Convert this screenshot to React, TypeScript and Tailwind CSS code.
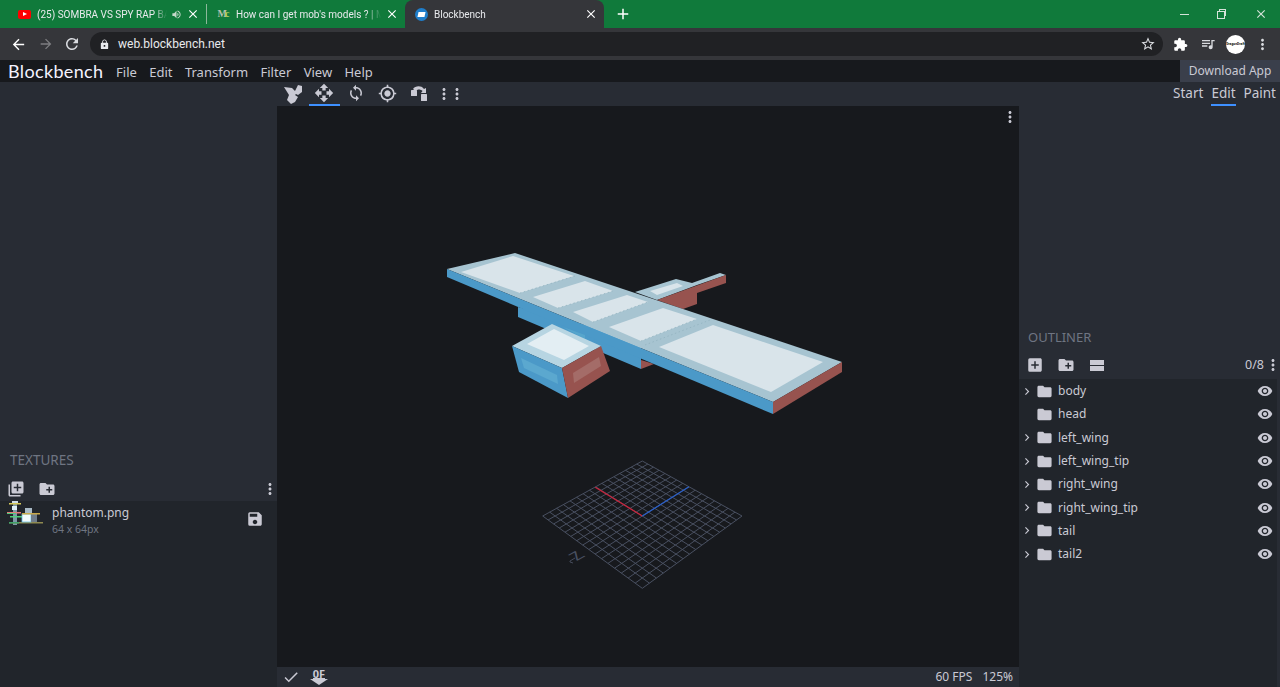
import type { ReactNode } from 'react';
import {
  MdAdd, MdAddBox, MdArrowBack, MdArrowForward, MdCheck, MdChevronRight, MdClose, MdCreateNewFolder,
  MdExtension, MdFolder, MdGpsFixed, MdLibraryAdd, MdLock, MdMoreVert, MdOpenWith, MdQueueMusic,
  MdRefresh, MdSave, MdStarBorder, MdSync, MdVisibility, MdVolumeUp,
} from 'react-icons/md';

const menus = ['File', 'Edit', 'Transform', 'Filter', 'View', 'Help'];

const outliner = [
  { name: 'body', arrow: true },
  { name: 'head', arrow: false },
  { name: 'left_wing', arrow: true },
  { name: 'left_wing_tip', arrow: true },
  { name: 'right_wing', arrow: true },
  { name: 'right_wing_tip', arrow: true },
  { name: 'tail', arrow: true },
  { name: 'tail2', arrow: true },
];

// model faces, in paint order, as traced in screen coordinates
const faces: [string, string][] = [
  ['#a7c4d1', '635,292 676,279 692,283 720,273 726,275 697,285 657,300'],
  ['#d9e4ea', '650,291 677,283 683,286 657,295'],
  ['#97534f', '657,300 726,275 726,283 697,293 697,304 683,309'],
  ['#4b99c8', '518,307 518,317 641,369 641,340'],
  ['#97534f', '641,369 654,364 641,360'],
  ['#a7c4d1', '447,269 515,253 842,362 773,402'],
  ['#4b99c8', '447,269 773,402 773,414 447,277'],
  ['#97534f', '773,402 842,362 842,372 773,414'],
  ['#d9e4ea', '461,272 513,256 574,276 520,293'],
  ['#d9e4ea', '533,297 585,281 613,291 558,308'],
  ['#d9e4ea', '573,312 627,295 648,302 593,322'],
  ['#d9e4ea', '609,327 663,308 697,319 641,341'],
  ['#d9e4ea', '659,347 713,325 823,362 771,392'],
  ['#56a5cc', '563,327 585,335 585,339 570,331'],
  ['#b7d5e2', '512,346 552,324 601,346 562,368'],
  ['#e3eef3', '527,344 554,329 589,346 564,360'],
  ['#4b99c8', '512,346 562,368 568,398 519,372'],
  ['#5ba8cf', '521,358 557,375 558,384 524,368'],
  ['#97534f', '562,368 601,346 610,371 568,398'],
  ['#a46c68', '573,373 599,357 601,366 574,383'],
];

const seams = ['520,293 575,276', '558,308 613,291', '593,322 648,302', '641,341 697,319', '645,345 710,320'];

type Pt = [number, number];

const gridCorners: Pt[] = [[642.3, 461], [742, 516], [642.3, 588.3], [542.7, 516]];

// square to quad, so the floor grid keeps its perspective
const project = (u: number, v: number): Pt => {
  const [[x0, y0], [x1, y1], [x2, y2], [x3, y3]] = gridCorners;
  const dx1 = x1 - x2, dx2 = x3 - x2, sx = x0 - x1 + x2 - x3;
  const dy1 = y1 - y2, dy2 = y3 - y2, sy = y0 - y1 + y2 - y3;
  const den = dx1 * dy2 - dx2 * dy1;
  const g = (sx * dy2 - dx2 * sy) / den;
  const h = (dx1 * sy - sx * dy1) / den;
  const w = g * u + h * v + 1;
  return [
    ((x1 - x0 + g * x1) * u + (x3 - x0 + h * x3) * v + x0) / w,
    ((y1 - y0 + g * y1) * u + (y3 - y0 + h * y3) * v + y0) / w,
  ];
};

const gridLines = Array.from({ length: 17 }, (_, i) => i / 16).flatMap((t) => [
  [project(t, 0), project(t, 1)],
  [project(0, t), project(1, t)],
]);

const Tab = ({ icon, title, active, extra }: { icon: ReactNode; title: string; active?: boolean; extra?: ReactNode }) => (
  <div className={active
    ? 'w-[199px] h-full flex items-center pl-[10px] pr-[6px] bg-[#35363a] rounded-t-lg text-[#e8eaed]'
    : 'w-[198px] h-full flex items-center pl-[10px] pr-[6px] text-[#e8eaed]'}>
    <div className="w-[13px] h-[13px] flex items-center justify-center shrink-0">{icon}</div>
    <div className="flex-1 min-w-0 ml-[6px] text-[10px] font-['Roboto',sans-serif] whitespace-nowrap overflow-hidden [mask-image:linear-gradient(to_right,black_90%,transparent)]">{title}</div>
    {extra}
    <MdClose className="w-[14px] h-[14px] shrink-0 ml-[4px] text-white" />
  </div>
);

const ToolButton = ({ children, active }: { children: ReactNode; active?: boolean }) => (
  <div className={active
    ? 'w-[31.5px] h-full flex items-center justify-center border-b-2 border-[#3e90ff] text-[#cacad4]'
    : 'w-[31.5px] h-full flex items-center justify-center border-b-2 border-transparent text-[#cacad4]'}>
    {children}
  </div>
);

const App = () => (
  <div className="w-[1280px] h-[687px] flex flex-col overflow-hidden bg-[#282c34] font-['Noto_Sans',sans-serif] text-[#cacad4]">
    {/* browser tabs */}
    <div className="h-[28px] shrink-0 flex items-center bg-[#107a3b] pl-[8px]">
      <Tab
        title="(25) SOMBRA VS SPY RAP BA"
        icon={<div className="w-[13px] h-[9px] rounded-[2px] bg-[#f00] flex items-center justify-center"><div className="w-0 h-0 border-y-[2.5px] border-y-transparent border-l-[4px] border-l-white" /></div>}
        extra={<MdVolumeUp className="w-[11px] h-[11px] ml-[4px] shrink-0 text-[#c5d9cb]" />}
      />
      <div className="w-px h-[20px] bg-[#8cb89b] shrink-0" />
      <Tab
        title="How can I get mob's models ? | M"
        icon={<span className="text-[10px] leading-none font-bold font-['Liberation_Serif',serif] whitespace-nowrap"><span className="text-[#b9c2b0]">M</span><span className="text-[#b5d05a] -ml-[2px]">c</span></span>}
      />
      <Tab
        active
        title="Blockbench"
        icon={<div className="w-[13px] h-[13px] rounded-full bg-[#1f7ecb] flex items-center justify-center"><div className="w-[7px] h-[5px] bg-white -skew-x-12" /></div>}
      />
      <MdAdd className="w-[18px] h-[18px] ml-[10px] text-white" />
      <div className="flex-1 flex justify-end items-center pr-[12px] text-[#d5e3d9]">
        <div className="w-[9px] h-px bg-[#d5e3d9]" />
        <div className="relative w-[10px] h-[10px] ml-[28px]">
          <div className="absolute left-[2px] top-0 w-[7px] h-[7px] border border-[#d5e3d9]" />
          <div className="absolute left-0 top-[2px] w-[8px] h-[8px] border border-[#d5e3d9] bg-[#107a3b]" />
        </div>
        <MdClose className="w-[14px] h-[14px] ml-[27px]" />
      </div>
    </div>

    {/* browser toolbar */}
    <div className="h-[32px] shrink-0 flex items-center bg-[#35363a] text-[#dadce0]">
      <MdArrowBack className="w-[17px] h-[17px] ml-[10px] text-white" />
      <MdArrowForward className="w-[16px] h-[16px] ml-[11px] text-[#7d7e81]" />
      <MdRefresh className="w-[18px] h-[18px] ml-[9px]" />
      <div className="w-[1073px] h-[24px] ml-[9px] rounded-full bg-[#202124] flex items-center pl-[9px] pr-[7px]">
        <MdLock className="w-[11px] h-[11px] text-[#e8eaed]" />
        <span className="ml-[8px] text-[12px] font-['Roboto',sans-serif] text-[#e8eaed]">web.blockbench.net</span>
        <MdStarBorder className="w-[16px] h-[16px] ml-auto" />
      </div>
      <MdExtension className="w-[15px] h-[15px] ml-[10px] text-white" />
      <MdQueueMusic className="w-[16px] h-[16px] ml-[12px]" />
      <div className="w-[19px] h-[19px] ml-[10px] rounded-full bg-white flex items-center justify-center text-[3px] text-black font-bold">DragonDraft</div>
      <MdMoreVert className="w-[17px] h-[17px] ml-[9px]" />
    </div>

    {/* blockbench menu */}
    <div className="h-[22px] shrink-0 flex items-center bg-[#17191d]">
      <span className="ml-[8px] mr-[6.500px] text-[18px] leading-none text-[#f4f3ff] font-['Lato',sans-serif] tracking-[0.35px]">Blockbench</span>
      {menus.map((m) => (
        <span key={m} className="px-[6.2px] pt-[2px] text-[13px] leading-none text-[#cacad4]">{m}</span>
      ))}
      <div className="ml-auto w-[100px] h-full bg-[#3a3f4b] flex items-center justify-center text-[12px]">Download App</div>
    </div>

    <div className="flex-1 min-h-0 flex">
      {/* left */}
      <div className="w-[277px] shrink-0 flex flex-col justify-end">
        <div className="px-[10px] h-[20px] flex items-center text-[13.5px] text-[#6f7582]">TEXTURES</div>
        <div className="h-[25px] flex items-center pl-[7px] mt-[6px]">
          <MdLibraryAdd className="w-[18px] h-[18px]" />
          <MdCreateNewFolder className="w-[18px] h-[18px] ml-[13px]" />
          <MdMoreVert className="w-[18px] h-[18px] ml-auto -mr-[2px]" />
        </div>
        <div className="h-[186px] bg-[#21252b]">
          <div className="flex items-start">
            <svg width="44" height="30" viewBox="0 0 44 30" className="ml-[4px] shrink-0">
              <rect x="9" y="0" width="4" height="24" fill="#7e98a8" />
              <rect x="8" y="0" width="6" height="3" fill="#cfdde6" />
              <rect x="5" y="2" width="12" height="1.5" fill="#d6c95a" />
              <rect x="8" y="5" width="5" height="4" fill="#dff0f8" />
              <rect x="3" y="11" width="14" height="1.5" fill="#e07a7a" />
              <rect x="3" y="12" width="9" height="1" fill="#4fd07a" />
              <rect x="6" y="15" width="12" height="1.5" fill="#4fd07a" />
              <rect x="5" y="21" width="34" height="1.5" fill="#8f8a50" />
              <rect x="5" y="21" width="10" height="1.5" fill="#3fa36a" />
              <rect x="21" y="7" width="7" height="6" fill="#a9bac6" />
              <rect x="18" y="13" width="9" height="8" fill="#f2fafd" stroke="#66bde0" strokeWidth="0.8" />
              <rect x="27" y="13" width="6" height="8" fill="#6f7c8a" />
              <rect x="18" y="12" width="18" height="1.5" fill="#c9a94a" />
            </svg>
            <div className="ml-[4px]">
              <div className="text-[12px] mt-[4px] leading-[16px]">phantom.png</div>
              <div className="text-[10.5px] leading-[16px] text-[#6f7582]">64 x 64px</div>
            </div>
            <MdSave className="w-[18px] h-[18px] ml-auto mr-[13px] mt-[9px]" />
          </div>
        </div>
      </div>

      {/* center */}
      <div className="w-[742px] shrink-0 flex flex-col">
        <div className="h-[24px] shrink-0 flex items-center">
          <ToolButton>
            <svg viewBox="0 0 24 22" className="w-[24px] h-[22px]" fill="currentColor">
              <path d="M3 5l8 1 3 3 3-6 4 1v6l-4 3-2-1-1 1 3 2-3 5-4 2-4-4 2-5z" />
            </svg>
          </ToolButton>
          <ToolButton active><MdOpenWith className="w-[20px] h-[20px]" /></ToolButton>
          <ToolButton><MdSync className="w-[18px] h-[18px]" /></ToolButton>
          <ToolButton><MdGpsFixed className="w-[19px] h-[19px]" /></ToolButton>
          <ToolButton>
            <svg viewBox="0 0 24 20" className="w-[24px] h-[20px]" fill="currentColor">
              <rect x="4" y="7" width="6" height="6" rx="0.5" />
              <rect x="14" y="11" width="6" height="7" rx="0.5" />
              <path d="M6 6c2-3 8-4 11 0l2-1v5h-5l1.500-2c-2-2-5-2-7 0z" />
            </svg>
          </ToolButton>
          <MdMoreVert className="w-[18px] h-[18px] -mr-[5px] -mt-[1px]" />
          <MdMoreVert className="w-[18px] h-[18px] -mt-[1px]" />
        </div>

        <div className="flex-1 min-h-0 relative bg-[#17191d]">
          <svg viewBox="277 106 742 561" className="w-full h-full block">
            {gridLines.map(([a, b], i) => (
              <line key={i} x1={a[0]} y1={a[1]} x2={b[0]} y2={b[1]} stroke="#495061" strokeWidth="1" />
            ))}
            <line x1="642.3" y1="516" x2="595.3" y2="487.3" stroke="#c8243c" strokeWidth="1.3" />
            <line x1="642.3" y1="516" x2="689" y2="486.7" stroke="#2a5fc8" strokeWidth="1.3" />
            <text transform="matrix(0.9 -0.5 0.9 0.5 577 561)" fontSize="16" fill="#495061" fontFamily="Liberation Sans">Z</text>
            <path d="M575 558l-5 3 0 1 3 1" fill="none" stroke="#495061" strokeWidth="0.9" />
            {faces.map(([fill, points]) => (
              <polygon key={points} points={points} fill={fill} />
            ))}
            {seams.map((s) => {
              const [a, b] = s.split(' ').map((p) => p.split(',').map(Number));
              return <line key={s} x1={a[0]} y1={a[1]} x2={b[0]} y2={b[1]} stroke="#8fb0bd" strokeWidth="0.7" strokeDasharray="1.5 2.5" />;
            })}
          </svg>
          <MdMoreVert className="absolute top-[2px] right-0 w-[18px] h-[18px]" />
        </div>

        <div className="h-[20px] shrink-0 flex items-center pr-[6px]">
          <MdCheck className="w-[18px] h-[18px] ml-[5px]" />
          <div className="ml-[10px] w-[18px] flex flex-col items-center">
            <span className="text-[11px] font-bold leading-[9px] border-b border-[#cacad4]">0F</span>
            <div className="w-0 h-0 border-x-[9px] border-x-transparent border-t-[6px] border-t-[#cacad4]" />
          </div>
          <span className="ml-auto text-[12px]">60 FPS</span>
          <span className="ml-[10px] text-[12px]">125%</span>
        </div>
      </div>

      {/* right */}
      <div className="flex-1 min-w-0 flex flex-col">
        <div className="h-[24px] shrink-0 flex items-center justify-end pr-[4px] gap-[8px] text-[13.5px]">
          <span className="h-full flex items-center border-b-2 border-transparent">Start</span>
          <span className="h-full flex items-center border-b-2 border-[#3e90ff]">Edit</span>
          <span className="h-full flex items-center border-b-2 border-transparent">Paint</span>
        </div>
        <div className="flex-1" />
        <div className="px-[9px] h-[20px] flex items-center text-[13px] text-[#6f7582]">OUTLINER</div>
        <div className="h-[25px] mt-[5px] mb-[1.5px] flex items-center pl-[7px]">
          <MdAddBox className="w-[18px] h-[18px]" />
          <MdCreateNewFolder className="w-[18px] h-[18px] ml-[13px]" />
          <svg viewBox="0 0 14 11" className="w-[14px] h-[11px] ml-[15px]" fill="currentColor">
            <rect width="14" height="5" />
            <rect y="6" width="14" height="5" />
          </svg>
          <span className="ml-auto text-[12.5px]">0/8</span>
          <MdMoreVert className="w-[18px] h-[18px] -mr-[2px]" />
        </div>
        <div className="h-[308px] bg-[#21252b] flex">
          <div className="flex-1 min-w-0 pt-[0.5px]">
            {outliner.map((o) => (
              <div key={o.name} className="h-[23.3px] flex items-center">
                <div className="w-[14px] ml-[1px] shrink-0 flex justify-center">
                  {o.arrow && <MdChevronRight className="w-[17px] h-[17px]" />}
                </div>
                <MdFolder className="w-[17px] h-[17px] ml-[2px]" />
                <span className="ml-[5px] text-[12px]">{o.name}</span>
                <MdVisibility className="w-[16px] h-[16px] ml-auto mr-[4px]" />
              </div>
            ))}
          </div>
          <div className="w-[3px] shrink-0 bg-[#282c34]" />
        </div>
      </div>
    </div>
  </div>
);

export default App;
